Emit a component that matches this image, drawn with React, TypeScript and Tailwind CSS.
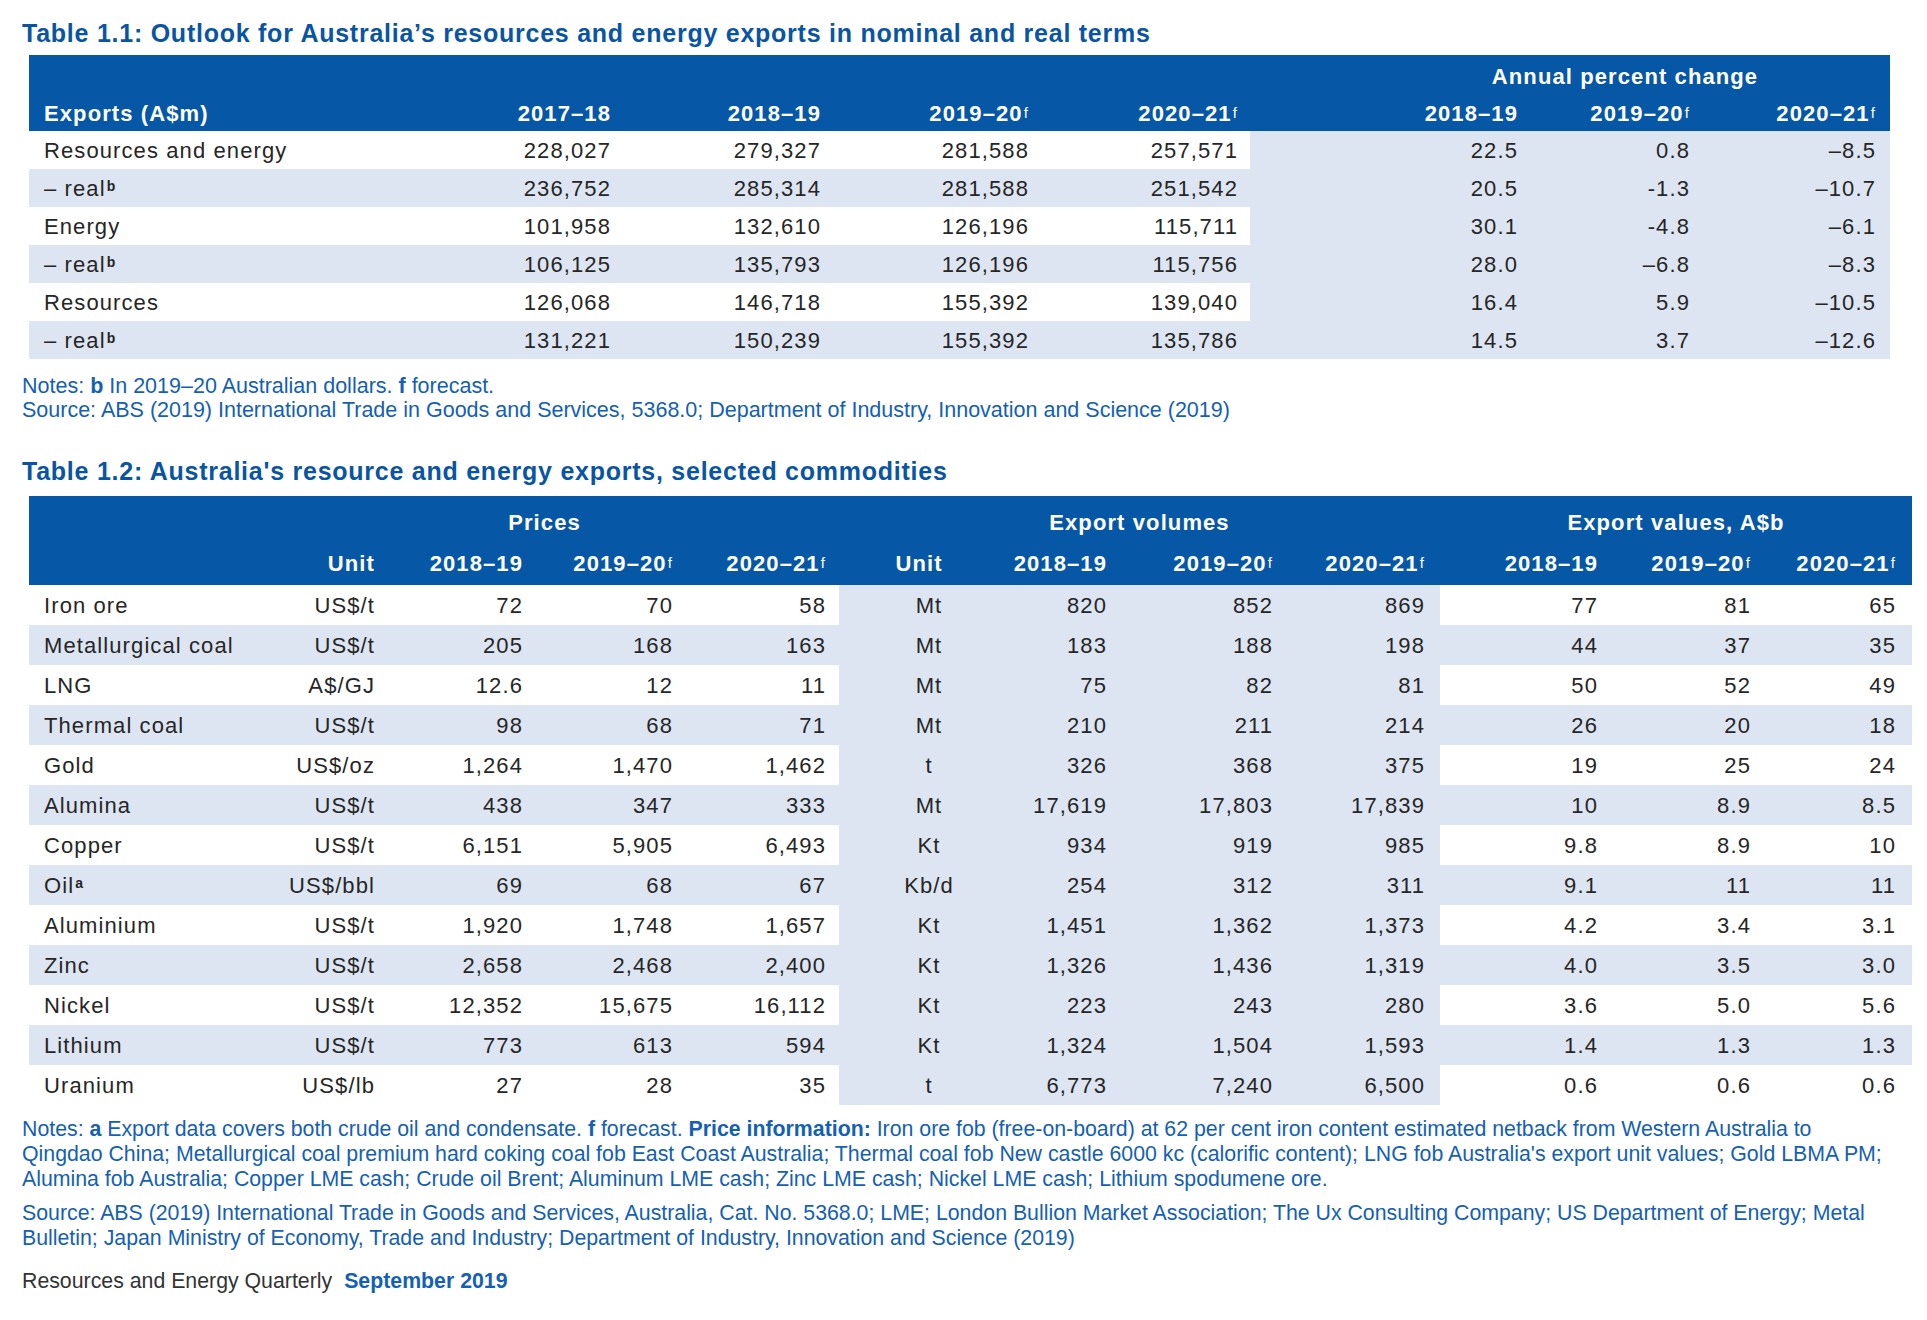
import clsx from "clsx"

const t1Cols = "grid grid-cols-[391px_203px_210px_208px_209px_280px_172px_188px]"
const t2Cols = "grid grid-cols-[221px_137px_148px_150px_154px_180px_100px_166px_155px_170px_153px_149px]"

type Row1 = { label: string; sup?: string; vals: string[]; pct: string[] }

const rows1: Row1[] = [
    { label: "Resources and energy", vals: ["228,027", "279,327", "281,588", "257,571"], pct: ["22.5", "0.8", "–8.5"] },
    { label: "– real", sup: "b", vals: ["236,752", "285,314", "281,588", "251,542"], pct: ["20.5", "-1.3", "–10.7"] },
    { label: "Energy", vals: ["101,958", "132,610", "126,196", "115,711"], pct: ["30.1", "-4.8", "–6.1"] },
    { label: "– real", sup: "b", vals: ["106,125", "135,793", "126,196", "115,756"], pct: ["28.0", "–6.8", "–8.3"] },
    { label: "Resources", vals: ["126,068", "146,718", "155,392", "139,040"], pct: ["16.4", "5.9", "–10.5"] },
    { label: "– real", sup: "b", vals: ["131,221", "150,239", "155,392", "135,786"], pct: ["14.5", "3.7", "–12.6"] },
]

type Row2 = { name: string; sup?: string; unit: string; prices: string[]; vunit: string; vols: string[]; values: string[] }

const rows2: Row2[] = [
    { name: "Iron ore", unit: "US$/t", prices: ["72", "70", "58"], vunit: "Mt", vols: ["820", "852", "869"], values: ["77", "81", "65"] },
    { name: "Metallurgical coal", unit: "US$/t", prices: ["205", "168", "163"], vunit: "Mt", vols: ["183", "188", "198"], values: ["44", "37", "35"] },
    { name: "LNG", unit: "A$/GJ", prices: ["12.6", "12", "11"], vunit: "Mt", vols: ["75", "82", "81"], values: ["50", "52", "49"] },
    { name: "Thermal coal", unit: "US$/t", prices: ["98", "68", "71"], vunit: "Mt", vols: ["210", "211", "214"], values: ["26", "20", "18"] },
    { name: "Gold", unit: "US$/oz", prices: ["1,264", "1,470", "1,462"], vunit: "t", vols: ["326", "368", "375"], values: ["19", "25", "24"] },
    { name: "Alumina", unit: "US$/t", prices: ["438", "347", "333"], vunit: "Mt", vols: ["17,619", "17,803", "17,839"], values: ["10", "8.9", "8.5"] },
    { name: "Copper", unit: "US$/t", prices: ["6,151", "5,905", "6,493"], vunit: "Kt", vols: ["934", "919", "985"], values: ["9.8", "8.9", "10"] },
    { name: "Oil", sup: "a", unit: "US$/bbl", prices: ["69", "68", "67"], vunit: "Kb/d", vols: ["254", "312", "311"], values: ["9.1", "11", "11"] },
    { name: "Aluminium", unit: "US$/t", prices: ["1,920", "1,748", "1,657"], vunit: "Kt", vols: ["1,451", "1,362", "1,373"], values: ["4.2", "3.4", "3.1"] },
    { name: "Zinc", unit: "US$/t", prices: ["2,658", "2,468", "2,400"], vunit: "Kt", vols: ["1,326", "1,436", "1,319"], values: ["4.0", "3.5", "3.0"] },
    { name: "Nickel", unit: "US$/t", prices: ["12,352", "15,675", "16,112"], vunit: "Kt", vols: ["223", "243", "280"], values: ["3.6", "5.0", "5.6"] },
    { name: "Lithium", unit: "US$/t", prices: ["773", "613", "594"], vunit: "Kt", vols: ["1,324", "1,504", "1,593"], values: ["1.4", "1.3", "1.3"] },
    { name: "Uranium", unit: "US$/lb", prices: ["27", "28", "35"], vunit: "t", vols: ["6,773", "7,240", "6,500"], values: ["0.6", "0.6", "0.6"] },
]

function Yr(props: { y: string; f?: boolean }) {
    return (
        <span className="whitespace-nowrap">
            {props.y}
            {props.f ? <sup className="text-[15px] font-normal relative top-[-3px] ml-[1px]">f</sup> : null}
        </span>
    )
}

function Table1() {
    const hd = "flex items-center justify-end pr-[12px]"
    return (
        <div className="ml-[7px] w-[1861px] text-[22px] tracking-[0.05em] text-[#262626] whitespace-nowrap">
            <div className="bg-[#0757a7] text-white font-bold">
                <div className={clsx(t1Cols, "h-[40px]")}>
                    <div className="col-span-5" />
                    <div className="col-span-3 flex items-center justify-center pl-[110px] pt-[2px]">Annual percent change</div>
                </div>
                <div className={clsx(t1Cols, "h-[36px]")}>
                    <div className="flex items-center pl-[15px]">Exports (A$m)</div>
                    <div className={hd}><Yr y="2017–18" /></div>
                    <div className={hd}><Yr y="2018–19" /></div>
                    <div className={hd}><Yr y="2019–20" f /></div>
                    <div className={hd}><Yr y="2020–21" f /></div>
                    <div className={hd}><Yr y="2018–19" /></div>
                    <div className={hd}><Yr y="2019–20" f /></div>
                    <div className={clsx(hd, "pr-[14px]")}><Yr y="2020–21" f /></div>
                </div>
            </div>
            {rows1.map((r, i) => {
                const left = i % 2 === 1 ? "bg-[#dce5f1]" : "bg-white"
                const cell = "h-[38px] flex items-center justify-end pr-[12px]"
                return (
                    <div key={i} className={t1Cols}>
                        <div className={clsx("h-[38px] flex items-center pl-[15px]", left)}>
                            {r.label}
                            {r.sup ? <sup className="text-[14px] font-bold relative top-[-2px] ml-[1px]">{r.sup}</sup> : null}
                        </div>
                        {r.vals.map((v, j) => <div key={j} className={clsx(cell, left)}>{v}</div>)}
                        {r.pct.map((v, j) => <div key={j} className={clsx(cell, "bg-[#dce5f1]", j === 2 && "pr-[14px]")}>{v}</div>)}
                    </div>
                )
            })}
        </div>
    )
}

function Table2() {
    const hd = "flex items-center justify-end"
    return (
        <div className="ml-[7px] w-[1883px] text-[22px] tracking-[0.05em] text-[#262626] whitespace-nowrap">
            <div className="bg-[#0757a7] text-white font-bold">
                <div className={clsx(t2Cols, "h-[46px]")}>
                    <div />
                    <div className="col-span-4 flex items-center justify-center pt-[6px]">Prices</div>
                    <div className="col-span-4 flex items-center justify-center pt-[6px]">Export volumes</div>
                    <div className="col-span-3 flex items-center justify-center pt-[6px]">Export values, A$b</div>
                </div>
                <div className={clsx(t2Cols, "h-[43px]")}>
                    <div />
                    <div className={clsx(hd, "pr-[12px]")}>Unit</div>
                    <div className={clsx(hd, "pr-[12px]")}><Yr y="2018–19" /></div>
                    <div className={clsx(hd, "pr-[12px]")}><Yr y="2019–20" f /></div>
                    <div className={clsx(hd, "pr-[13px]")}><Yr y="2020–21" f /></div>
                    <div className="flex items-center justify-center pr-[20px]">Unit</div>
                    <div className={clsx(hd, "pr-[12px]")}><Yr y="2018–19" /></div>
                    <div className={clsx(hd, "pr-[12px]")}><Yr y="2019–20" f /></div>
                    <div className={clsx(hd, "pr-[15px]")}><Yr y="2020–21" f /></div>
                    <div className={clsx(hd, "pr-[12px]")}><Yr y="2018–19" /></div>
                    <div className={clsx(hd, "pr-[12px]")}><Yr y="2019–20" f /></div>
                    <div className={clsx(hd, "pr-[16px]")}><Yr y="2020–21" f /></div>
                </div>
            </div>
            {rows2.map((r, i) => {
                const bg = i % 2 === 1 ? "bg-[#dce5f1]" : "bg-white"
                const cell = "h-[40px] flex items-center justify-end"
                const pads = ["pr-[12px]", "pr-[12px]", "pr-[13px]"]
                const vpads = ["pr-[12px]", "pr-[12px]", "pr-[15px]"]
                const valpads = ["pr-[12px]", "pr-[12px]", "pr-[16px]"]
                return (
                    <div key={i} className={t2Cols}>
                        <div className={clsx("h-[40px] flex items-center pl-[15px]", bg)}>
                            {r.name}
                            {r.sup ? <sup className="text-[14px] font-bold relative top-[-2px] ml-[1px]">{r.sup}</sup> : null}
                        </div>
                        <div className={clsx(cell, "pr-[12px]", bg)}>{r.unit}</div>
                        {r.prices.map((v, j) => <div key={j} className={clsx(cell, pads[j], bg)}>{v}</div>)}
                        <div className="h-[40px] flex items-center justify-center bg-[#dce5f1]">{r.vunit}</div>
                        {r.vols.map((v, j) => <div key={j} className={clsx(cell, vpads[j], "bg-[#dce5f1]")}>{v}</div>)}
                        {r.values.map((v, j) => <div key={j} className={clsx(cell, valpads[j], bg)}>{v}</div>)}
                    </div>
                )
            })}
        </div>
    )
}

export default function App() {
    return (
        <div className="w-[1927px] h-[1320px] bg-white px-[22px] pt-[18px] font-['Liberation_Sans',Arial,sans-serif]">
            <h1 className="text-[25px] leading-[30px] font-bold tracking-[0.03em] text-[#0a55a3] whitespace-nowrap">
                Table 1.1: Outlook for Australia’s resources and energy exports in nominal and real terms
            </h1>
            <div className="mt-[7px]">
                <Table1 />
            </div>
            <div className="mt-[15px] text-[21.5px] leading-[24px] text-[#1460b4]">
                <div className="whitespace-nowrap">Notes: <b>b</b> In 2019–20 Australian dollars. <b>f</b> forecast.</div>
                <div className="whitespace-nowrap">Source: ABS (2019) International Trade in Goods and Services, 5368.0; Department of Industry, Innovation and Science (2019)</div>
            </div>
            <h2 className="mt-[34px] text-[25px] leading-[30px] font-bold tracking-[0.03em] text-[#0a55a3] whitespace-nowrap">
                Table 1.2: Australia's resource and energy exports, selected commodities
            </h2>
            <div className="mt-[10px]">
                <Table2 />
            </div>
            <div className="mt-[12px] text-[21.3px] leading-[25px] text-[#1460b4]">
                <div className="whitespace-nowrap">Notes: <b>a</b> Export data covers both crude oil and condensate. <b>f</b> forecast. <b>Price information:</b> Iron ore fob (free-on-board) at 62 per cent iron content estimated netback from Western Australia to</div>
                <div className="whitespace-nowrap">Qingdao China; Metallurgical coal premium hard coking coal fob East Coast Australia; Thermal coal fob New castle 6000 kc (calorific content); LNG fob Australia's export unit values; Gold LBMA PM;</div>
                <div className="whitespace-nowrap">Alumina fob Australia; Copper LME cash; Crude oil Brent; Aluminum LME cash; Zinc LME cash; Nickel LME cash; Lithium spodumene ore.</div>
            </div>
            <div className="mt-[9px] text-[21.3px] leading-[25px] text-[#1460b4]">
                <div className="whitespace-nowrap">Source: ABS (2019) International Trade in Goods and Services, Australia, Cat. No. 5368.0; LME; London Bullion Market Association; The Ux Consulting Company; US Department of Energy; Metal</div>
                <div className="whitespace-nowrap">Bulletin; Japan Ministry of Economy, Trade and Industry; Department of Industry, Innovation and Science (2019)</div>
            </div>
            <div className="mt-[18px] text-[21.3px] leading-[25px] whitespace-nowrap">
                <span className="text-[#333333]">Resources and Energy Quarterly</span>
                <span className="ml-[12px] font-bold text-[#1460b4]">September 2019</span>
            </div>
        </div>
    )
}
